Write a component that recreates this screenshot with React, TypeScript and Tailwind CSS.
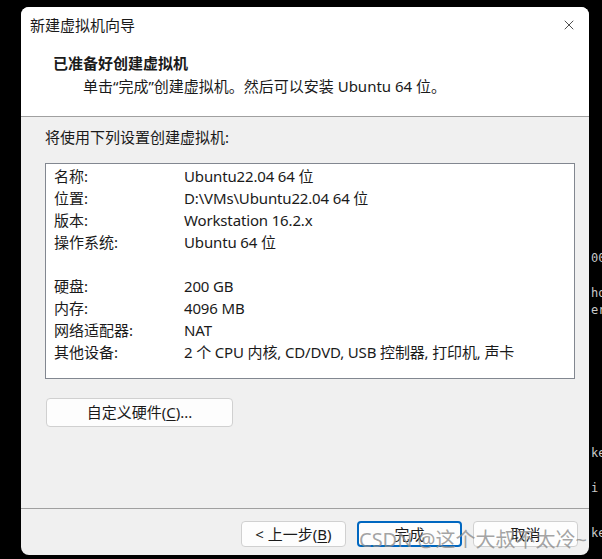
import { X } from "lucide-react"

const font = { fontFamily: '"Noto Sans", "Noto Sans CJK SC", sans-serif' }

const rows: [string, string][] = [
  ["名称:", "Ubuntu22.04 64 位"],
  ["位置:", "D:\\VMs\\Ubuntu22.04 64 位"],
  ["版本:", "Workstation 16.2.x"],
  ["操作系统:", "Ubuntu 64 位"],
  ["", ""],
  ["硬盘:", "200 GB"],
  ["内存:", "4096 MB"],
  ["网络适配器:", "NAT"],
  ["其他设备:", "2 个 CPU 内核, CD/DVD, USB 控制器, 打印机, 声卡"],
]

function Btn({ children, primary = false }: { children: React.ReactNode; primary?: boolean }) {
  return (
    <button
      type="button"
      className={
        primary
          ? "h-[26px] w-[105px] rounded-[4px] border-2 border-[#0067c0] bg-[#fdfdfd] text-[15px] leading-none text-[#1a1a1a]"
          : "h-[26px] w-[105px] rounded-[4px] border border-[#d0d0d0] bg-[#fdfdfd] text-[15px] leading-none text-[#1a1a1a]"
      }
    >
      {children}
    </button>
  )
}

export default function App() {
  return (
    <div className="relative flex h-[559px] w-[602px] overflow-hidden bg-black pt-[7px] text-[#1a1a1a]" style={font}>
      <div className="w-[21px] shrink-0" />
      <div className="flex h-[548px] w-[568px] shrink-0 flex-col overflow-hidden rounded-[8px] bg-[#f0f0f0]">
        {/* title + header */}
        <div className="h-[109px] bg-white">
          <div className="flex h-[36px] items-center justify-between pl-[9px] pr-[12px]">
            <span className="text-[15px]">新建虚拟机向导</span>
            <X size={16} strokeWidth={1.2} className="text-[#222]" />
          </div>
          <div className="pl-[32px] pt-[9px] text-[15px] font-bold leading-[22px]">已准备好创建虚拟机</div>
          <div className="pl-[62px] pt-[1px] text-[15px] leading-[22px]">单击“完成”创建虚拟机。然后可以安装 Ubuntu 64 位。</div>
        </div>
        <div className="h-px bg-[#a0a0a0]" />
        {/* content */}
        <div className="flex flex-1 flex-col px-[24px] pt-[9px]">
          <div className="text-[15px] leading-[22px]">将使用下列设置创建虚拟机:</div>
          <div className="mt-[15px] h-[216px] w-[530px] border border-[#828790] bg-white pl-[8px] pt-px">
            {rows.map(([k, v], i) => (
              <div key={i} className="flex h-[22px] items-center text-[15px] leading-[22px]">
                <span className="w-[130px] shrink-0">{k}</span>
                <span className="whitespace-nowrap tracking-[-0.15px]">{v}</span>
              </div>
            ))}
          </div>
          <button
            type="button"
            className="ml-[1px] mt-[19px] h-[29px] w-[187px] rounded-[4px] border border-[#d0d0d0] bg-[#fdfdfd] text-[15px] leading-none"
          >
            自定义硬件(<span className="underline underline-offset-2">C</span>)...
          </button>
        </div>
        <div className="h-px bg-[#a0a0a0]" />
        {/* footer */}
        <div className="flex h-[46px] items-start justify-end gap-[11px] pr-[11px] pt-[12px]">
          <Btn>
            &lt; 上一步(<span className="underline underline-offset-2">B</span>)
          </Btn>
          <Btn primary>完成</Btn>
          <Btn>取消</Btn>
        </div>
      </div>
      {/* terminal fragments behind */}
      <div
        className="flex w-[13px] shrink-0 flex-col pl-[2px] text-[12px] leading-[17px] text-[#c8c8c8]"
        style={{ fontFamily: '"DejaVu Sans Mono", monospace' }}
      >
        <div className="h-[243px]" />
        <div>00</div>
        <div className="h-[18px]" />
        <div>ho</div>
        <div>er</div>
        <div className="h-[126px]" />
        <div>ke</div>
        <div className="h-[18px]" />
        <div>i</div>
        <div className="h-[28px]" />
        <div>ke</div>
      </div>
      <div className="pointer-events-none absolute left-[359px] top-[530px] whitespace-nowrap text-[20px] leading-none text-[#8c8c8c]/80">
        CSDN @这个大叔不太冷~
      </div>
    </div>
  )
}
